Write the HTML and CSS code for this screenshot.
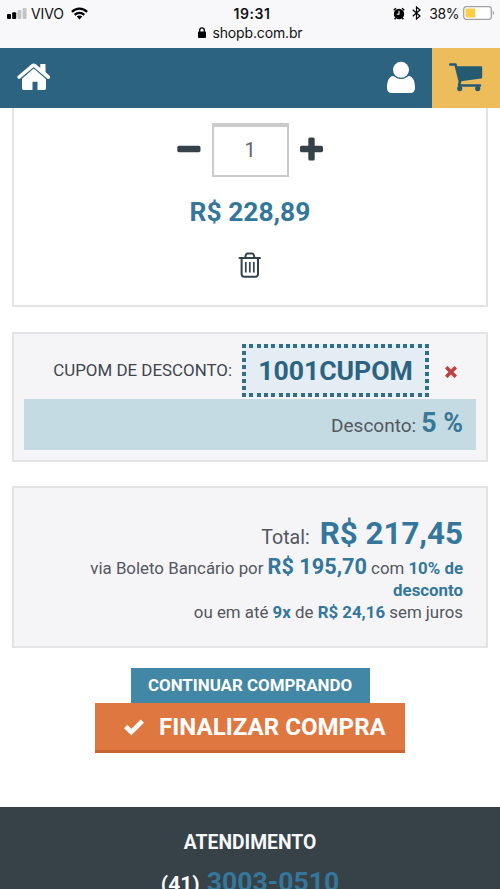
FILE: index.html
```html
<!DOCTYPE html>
<html lang="pt-BR">
<head>
<meta charset="utf-8">
<title>Carrinho</title>
<link rel="stylesheet" href="styles.css">
</head>
<body>
<div class="status">
  <div class="status-row">
    <div class="carrier">
      <svg width="20" height="11" viewBox="0 0 20 11"><rect x="0" y="6" width="4" height="5" rx="1"/><rect x="5.2" y="4.2" width="4" height="6.8" rx="1"/><g fill="#c3c4c6"><rect x="10.4" y="2" width="4" height="9" rx="1"/><rect x="15.6" y="0" width="4" height="11" rx="1"/></g></svg>
      <span class="carrier-name">VIVO</span>
      <svg width="17" height="13" viewBox="0 0 17 13"><g fill="none" stroke="#000" stroke-width="2.2"><path d="M.9 4.9C5.2.6 11.8.6 16.1 4.9"/><path d="M3.7 7.9C6.4 5.3 10.6 5.3 13.3 7.9"/></g><path d="M5.7 9.5C7.3 8 9.7 8 11.3 9.5L8.5 12.4Z"/></svg>
    </div>
    <span class="clock">19:31</span>
    <div class="indicators">
      <svg width="12" height="13" viewBox="0 0 12 13"><circle cx="6" cy="7" r="5.2"/><path d="M.7 3.3 3 1.2M11.3 3.3 9 1.2M2.6 11 1.6 12.2M9.4 11l1 1.2" stroke="#000" stroke-width="1.5"/><path d="M6 3.7V7.2H3.7" fill="none" stroke="#fff" stroke-width="1.1"/></svg>
      <svg class="bluetooth" width="9" height="14" viewBox="0 0 9 14"><path d="M.7 3.7 8 10 4.5 13V1L8 4 .7 10.3" fill="none" stroke="#000" stroke-width="1.2"/></svg>
      <span class="percent">38%</span>
      <svg width="32" height="14" viewBox="0 0 32 14"><rect x=".7" y=".7" width="27.6" height="12.6" rx="2.5" fill="#fff" stroke="#a0a0a2" stroke-width="1.3"/><rect x="2.6" y="2.6" width="9.7" height="8.8" rx=".7" fill="#f8cf45"/><path d="M29.8 4.8Q32.2 7 29.8 9.2Z" fill="#98989a"/></svg>
    </div>
  </div>
  <div class="address">
    <svg width="8" height="11" viewBox="0 0 8 11"><rect y="4.5" width="8" height="6.5" rx=".9"/><path d="M1.7 5V3.2a2.3 2.3 0 0 1 4.6 0V5" fill="none" stroke="#000" stroke-width="1.3"/></svg>
    <span class="host">shopb.com.br</span>
  </div>
</div>

<header class="navbar">
  <svg class="home" width="34" height="28" viewBox="0 0 34 28"><path d="M5 15 16.7 4.7 29 15v10.2q0 1.800-1.800 1.800h-6.700v-8.300h-5V27H6.800Q5 27 5 25.200z" fill="#fff"/><path d="M2.200 14.300 15.400 2.800q1.300-1.100 2.600 0l13.300 11.500" fill="none" stroke="#2b6380" stroke-width="5.6"/><path d="M2.200 14 15.400 2.800q1.300-1.100 2.600 0L31.300 14" fill="none" stroke="#fff" stroke-width="3.6" stroke-linecap="round"/><path d="M23.300 1h5.200v10.500L23.300 7z" fill="#fff"/></svg>
  <svg class="user" width="30" height="33" viewBox="0 0 30 33"><path d="M7.300 15Q15 21 22.700 15C27 15.500 29 20 29 27q0 5-5 5H6q-5 0-5-5C1 20 3 15.500 7.300 15Z" fill="#fff"/><circle cx="15" cy="9" r="9" fill="#2b6380"/><circle cx="15" cy="8.8" r="8" fill="#fff"/></svg>
  <div class="cart">
    <svg width="36" height="30" viewBox="0 0 36 30"><g fill="none" stroke="#255b70" stroke-width="2.6" stroke-linecap="round" stroke-linejoin="round"><path d="M2.300 2.500H7.500L12 20"/><path d="M12 19.500 11 23.500H32"/></g><path d="M8 4.300H33.200q1 0 1 1v10.200q0 1-1 1.100L11.300 19.500Z" fill="#255b70"/><circle cx="11.7" cy="26.6" r="2.6" fill="#255b70"/><circle cx="29.7" cy="26.6" r="2.6" fill="#255b70"/></svg>
  </div>
</header>

<main>
  <section class="card item">
    <div class="quantity">
      <svg width="24" height="24" viewBox="0 0 24 24"><rect x=".3" y="8.8" width="23.2" height="6.4" rx="1.6" fill="#36424a"/></svg>
      <div class="qty-box">1</div>
      <svg width="24" height="24" viewBox="0 0 24 24"><g fill="#36424a"><rect x="0" y="8.8" width="23" height="6.4" rx="1.6"/><rect x="8.3" y=".4" width="6.4" height="23.2" rx="1.6"/></g></svg>
    </div>
    <div class="item-price">R$ 228,89</div>
    <svg class="trash" width="24" height="26" viewBox="0 0 24 26"><g fill="none" stroke="#36424a" stroke-width="2"><path d="M1.500 6H22" stroke-linecap="round"/><path d="M7 6 8 2.600Q8.300 1.500 9.500 1.500h4.600q1.200 0 1.500 1.100L16.600 6"/><path d="M3.600 6.500V22q0 2.700 2.500 2.700h11.400q2.500 0 2.500-2.700V6.500"/><path d="M7.800 10V20.500M11.800 10V20.500M15.800 10V20.500" stroke-width="1.7"/></g></svg>
  </section>

  <section class="card coupon">
    <div class="coupon-row">
      <span class="coupon-label">CUPOM DE DESCONTO:</span>
      <span class="coupon-code">1001CUPOM</span>
      <svg class="remove" width="12" height="12" viewBox="0 0 12 12"><path d="M2.500 2.500 9.500 9.500M9.500 2.500 2.500 9.500" stroke="#b84445" stroke-width="3.7" stroke-linecap="square"/></svg>
    </div>
    <div class="discount"><span class="discount-label">Desconto:</span><b>5 %</b></div>
  </section>

  <section class="card summary">
    <div class="total"><span class="total-label">Total:</span><b>R$ 217,45</b></div>
    <div class="line boleto">via Boleto Bancário por <b class="big">R$ 195,70</b> com <b>10% de</b></div>
    <div class="line"><b class="wrap">desconto</b></div>
    <div class="line">ou em até <b>9x</b> de <b>R$ 24,16</b> sem juros</div>
  </section>

  <div class="actions">
    <a class="continue">CONTINUAR COMPRANDO</a>
    <a class="checkout"><svg width="22" height="18" viewBox="0 0 22 18"><path d="M2.700 8.500 8.300 14.100 19.300 3.200" fill="none" stroke="#fff" stroke-width="4.6"/></svg><span>FINALIZAR COMPRA</span></a>
  </div>
</main>

<footer>
  <div class="support">ATENDIMENTO</div>
  <div class="phone"><span class="area">(41)</span><span class="number">3003-0510</span></div>
</footer>
</body>
</html>
```
FILE: styles.css
```css
* { box-sizing: border-box; }
body {
  margin: 0;
  height: 889px;
  overflow: hidden;
  display: flex;
  flex-direction: column;
  background: #fff;
  color: #53575e;
  font-family: Roboto, "Liberation Sans", sans-serif;
}
svg { display: block; flex: none; }
b { font-weight: 700; color: #34779a; }

.status {
  flex: none;
  height: 48px;
  padding-top: 3px;
  background: #f8f8fa;
  color: #111;
  font-family: Inter, sans-serif;
}
.status-row {
  display: grid;
  grid-template-columns: 1fr auto 1fr;
  align-items: center;
  height: 20px;
}
.carrier { display: flex; align-items: center; padding-left: 7px; }
.carrier-name { margin: 0 7px 0 4px; font-size: 14px; letter-spacing: -0.1px; }
.clock { padding-left: 4px; font-size: 14px; font-weight: 600; letter-spacing: 0.6px; }
.indicators { display: flex; align-items: center; justify-content: flex-end; padding-right: 5px; }
.bluetooth { margin-left: 7px; }
.percent { margin: 0 4px 0 8px; font-size: 14px; letter-spacing: -0.4px; }
.address { display: flex; align-items: center; justify-content: center; gap: 7px; height: 19px; }
.host { font-size: 14px; letter-spacing: -0.15px; }

.navbar { flex: none; display: flex; height: 60px; background: #2b6380; }
.home { margin: 15px 0 0 17px; }
.user { margin: 13px 16px 0 auto; }
.cart { width: 68px; padding: 14px 0 0 16px; background: #edbd5c; }

main { flex: none; height: 699px; padding: 0 12px; }
.card { border: 2px solid #e3e4e6; }
.item {
  display: flex;
  flex-direction: column;
  align-items: center;
  height: 199px;
  padding-top: 15px;
  border-top: 0;
}
.quantity { display: flex; align-items: center; gap: 11px; }
.quantity svg { margin-bottom: 3px; }
.qty-box {
  width: 77px;
  height: 54px;
  border: 2px solid #cbcbcc;
  border-top-width: 4px;
  font-size: 20px;
  line-height: 46px;
  text-align: center;
  color: #62666b;
}
.item-price { margin-top: 19px; font-size: 26.4px; line-height: 32px; font-weight: 700; color: #34779a; }
.trash { margin-top: 24px; }

.coupon { height: 130px; margin-top: 25px; padding: 10px 10px 0; background: #f5f5f8; }
.coupon-row { display: flex; align-items: center; justify-content: flex-end; height: 53px; padding-right: 19px; }
.coupon-label { margin-bottom: 1px; font-size: 16.9px; color: #40464e; }
.coupon-code {
  width: 187px;
  height: 53px;
  margin: 0 16px 0 10px;
  background:
    repeating-linear-gradient(90deg, #326f87 0 4px, #e3edf3 4px 7.32px) top / 100% 4px no-repeat,
    repeating-linear-gradient(90deg, #326f87 0 4px, #e3edf3 4px 7.32px) bottom / 100% 4px no-repeat,
    repeating-linear-gradient(#326f87 0 4px, #e3edf3 4px 7px) left / 4px 100% no-repeat,
    repeating-linear-gradient(#326f87 0 4px, #e3edf3 4px 7px) right / 4px 100% no-repeat,
    #e3edf3;
  font-size: 26.6px;
  line-height: 53px;
  font-weight: 700;
  text-align: center;
  color: #2b6380;
}
.remove { margin-top: 2px; }
.discount {
  height: 51px;
  margin-top: 2px;
  padding-right: 13px;
  background: #c5dbe3;
  text-align: right;
  line-height: 48px;
}
.discount-label { margin-right: 5px; font-size: 19px; }
.discount b { font-size: 26.8px; color: #3a7897; }

.summary { height: 162px; margin-top: 24px; padding: 23px 23px 0; background: #f5f5f8; text-align: right; }
.total { height: 46px; line-height: 45px; }
.total-label { margin-right: 10px; font-size: 19.6px; }
.total b { font-size: 31.3px; }
.line { height: 22px; line-height: 22px; font-size: 16.85px; white-space: nowrap; }
.line .big { font-size: 21.7px; line-height: 20px; }

.actions { display: flex; flex-direction: column; align-items: center; padding-top: 20px; color: #fff; font-weight: 700; }
.continue { width: 239px; height: 35px; background: #4287a5; line-height: 35px; font-size: 16.9px; text-align: center; }
.checkout {
  display: flex;
  align-items: flex-start;
  width: 310px;
  height: 50px;
  padding-left: 28px;
  background: #df7740;
  border-bottom: 3px solid #c76434;
  font-size: 24.1px;
  line-height: 48px;
}
.checkout svg { margin: 15px 14px 0 0; }

footer { flex: none; height: 82px; padding-top: 22px; background: #364148; text-align: center; font-weight: 700; color: #f7f8fa; }
.support { font-size: 19.3px; line-height: 27px; }
.phone { display: flex; justify-content: center; align-items: baseline; margin-top: 9px; line-height: 34px; }
.area { margin-right: 7px; font-size: 21px; }
.number { font-size: 26.6px; color: #34779a; }
```
